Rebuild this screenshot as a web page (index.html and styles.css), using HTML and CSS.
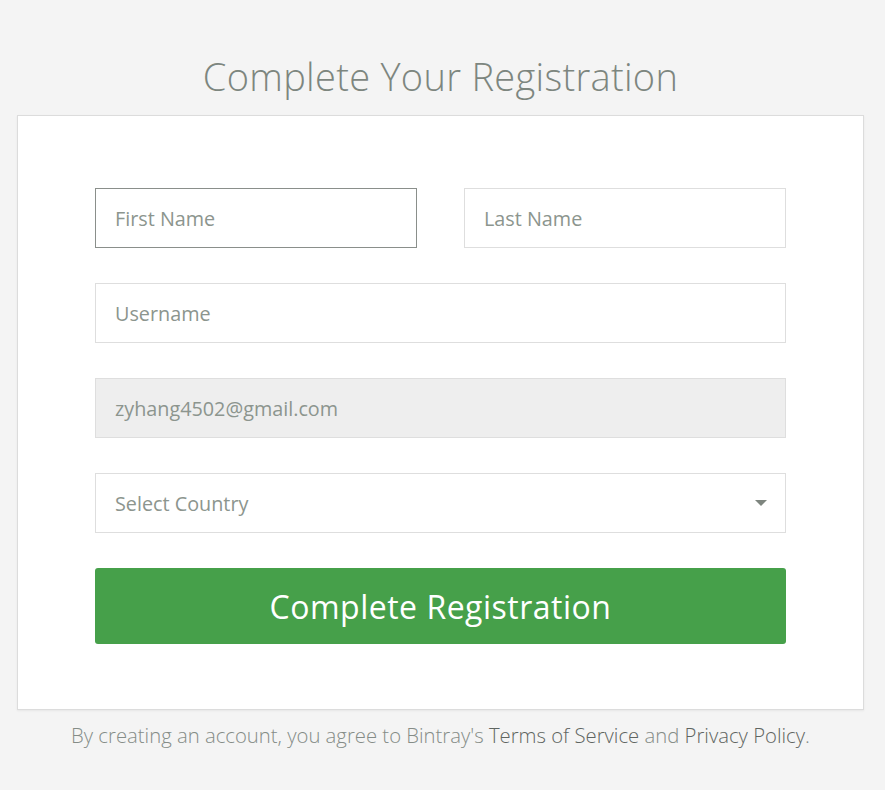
FILE: index.html
```html
<!DOCTYPE html>
<html>
<head>
<meta charset="utf-8">
<link rel="stylesheet" href="styles.css">
</head>
<body>
<div class="page">
  <h1 class="title">Complete Your Registration</h1>
  <div class="card">
    <form class="form">
      <div class="row">
        <input class="field focused" type="text" placeholder="First Name">
        <input class="field" type="text" placeholder="Last Name">
      </div>
      <input class="field" type="text" placeholder="Username">
      <input class="field disabled" type="text" value="zyhang4502@gmail.com" disabled>
      <div class="select">
        <span>Select Country</span>
        <span class="caret"></span>
      </div>
      <button class="btn" type="button">Complete Registration</button>
    </form>
  </div>
  <p class="terms">By creating an account, you agree to Bintray's <a href="#">Terms of Service</a> and <a href="#">Privacy Policy</a>.</p>
</div>
</body>
</html>
```
FILE: styles.css
```css
html, body {
  margin: 0;
  padding: 0;
  background: #f4f4f4;
  font-family: "Open Sans", "Liberation Sans", sans-serif;
}
.page {
  padding: 0 21px 0 17px;
}
.title {
  margin: 0;
  padding-top: 54px;
  height: 61px;
  line-height: 44px;
  font-size: 38px;
  font-weight: 300;
  color: #7d867f;
  text-align: center;
  letter-spacing: 0.3px;
}
.card {
  background: #fff;
  border: 1px solid #dcdcdc;
  box-shadow: 0 1px 2px rgba(0,0,0,0.06);
  padding: 72px 77px 65px;
}
.form {
  display: flex;
  flex-direction: column;
  gap: 35px;
}
.row {
  display: flex;
  gap: 47px;
}
.row .field {
  flex: 1;
  min-width: 0;
}
.field, .select {
  box-sizing: border-box;
  height: 60px;
  border: 1px solid #dedede;
  padding: 0 19px;
  font-family: "Open Sans", "Liberation Sans", sans-serif;
  font-size: 19.8px;
  color: #8c958e;
  background: #fff;
  outline: none;
  border-radius: 0;
  margin: 0;
  width: 100%;
}
.field::placeholder {
  color: #8c958e;
  opacity: 1;
}
.field.focused {
  border-color: #8a8f8b;
}
.field.disabled {
  background: #eeeeee;
  color: #8c958e;
  -webkit-text-fill-color: #8c958e;
  opacity: 1;
}
.select {
  display: flex;
  align-items: center;
  justify-content: space-between;
  padding-right: 18px;
}
.caret {
  width: 0;
  height: 0;
  border-left: 6px solid transparent;
  border-right: 6px solid transparent;
  border-top: 6px solid #7e857f;
}
.btn {
  height: 76px;
  border: none;
  border-radius: 3px;
  background: #46a04a;
  color: #fff;
  font-family: "Open Sans", "Liberation Sans", sans-serif;
  font-size: 32px;
  font-weight: 400;
  letter-spacing: 0.5px;
  cursor: pointer;
}
.terms {
  margin: 11px 0 0;
  text-align: center;
  font-size: 20.3px;
  font-weight: 300;
  color: #858c87;
}
.terms a {
  color: #5f6561;
  text-decoration: none;
  font-weight: 300;
}
```
